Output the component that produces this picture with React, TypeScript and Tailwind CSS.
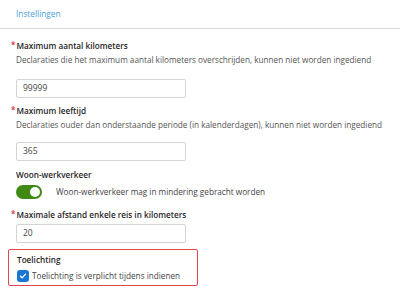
function Req() {
  return <span className="-ml-[5px] mr-[1px] align-top text-[8px] leading-[12px] text-[#d9262a]">*</span>;
}

function Field({ value, className = "" }: { value: string; className?: string }) {
  return (
    <div
      className={`flex h-[19px] w-[170px] items-center rounded-[2px] border border-[#d4d4d4] px-[6px] text-[8.5px] text-[#444] ${className}`}
    >
      {value}
    </div>
  );
}

export default function App() {
  return (
    <div className="h-[292px] w-[400px] overflow-hidden bg-white font-['Open_Sans',sans-serif]">
      <div className="h-[29px] border-b border-[#dcdcdc] pl-4 pt-[7px] text-[8.3px] leading-[14px] text-[#4aa0e0]">
        Instellingen
      </div>
      <div className="pl-4">
        <div className="mt-[10px] text-[8.2px] leading-[14px] font-semibold text-[#1f1f1f]">
          <Req />
          Maximum aantal kilometers
        </div>
        <div className="text-[8.2px] leading-[14px] text-[#555]">
          Declaraties die het maximum aantal kilometers overschrijden, kunnen niet worden ingediend
        </div>
        <Field value="99999" className="mt-[12px]" />

        <div className="mt-[6px] text-[8.2px] leading-[14px] font-semibold text-[#1f1f1f]">
          <Req />
          Maximum leeftijd
        </div>
        <div className="text-[8.2px] leading-[14px] text-[#555]">
          Declaraties ouder dan onderstaande periode (in kalenderdagen), kunnen niet worden ingediend
        </div>
        <Field value="365" className="mt-[10px]" />

        <div className="mt-[7px] text-[8.2px] leading-[14px] font-semibold text-[#1f1f1f]">Woon-werkverkeer</div>
        <div className="mt-[3px] flex items-center">
          <div className="flex h-[14px] w-[26px] items-center justify-end rounded-full bg-[#3f8a14] pr-[2px]">
            <div className="size-[10px] rounded-full bg-white" />
          </div>
          <span className="ml-[14px] text-[8.2px] text-[#444]">Woon-werkverkeer mag in mindering gebracht worden</span>
        </div>

        <div className="mt-[9px] text-[8.2px] leading-[14px] font-semibold text-[#1f1f1f]">
          <Req />
          Maximale afstand enkele reis in kilometers
        </div>
        <Field value="20" className="mt-[2px]" />

        <div className="-ml-2 mt-[6px] w-[190px] rounded-[2px] border border-[#e0474c] pb-[2px] pl-2 pt-[3px]">
          <div className="text-[8.2px] leading-[14px] font-semibold text-[#1f1f1f]">Toelichting</div>
          <div className="mt-[2px] flex items-center">
            <div className="flex size-[12px] items-center justify-center rounded-[3px] bg-[#1976d2]">
              <svg viewBox="0 0 12 12" className="size-[10px]">
                <path d="M3 6.2 L5 8.2 L9 3.8" fill="none" stroke="white" strokeWidth="1.6" strokeLinecap="round" strokeLinejoin="round" />
              </svg>
            </div>
            <span className="ml-[3px] text-[8.2px] leading-[14px] text-[#444]">Toelichting is verplicht tijdens indienen</span>
          </div>
        </div>
      </div>
    </div>
  );
}
